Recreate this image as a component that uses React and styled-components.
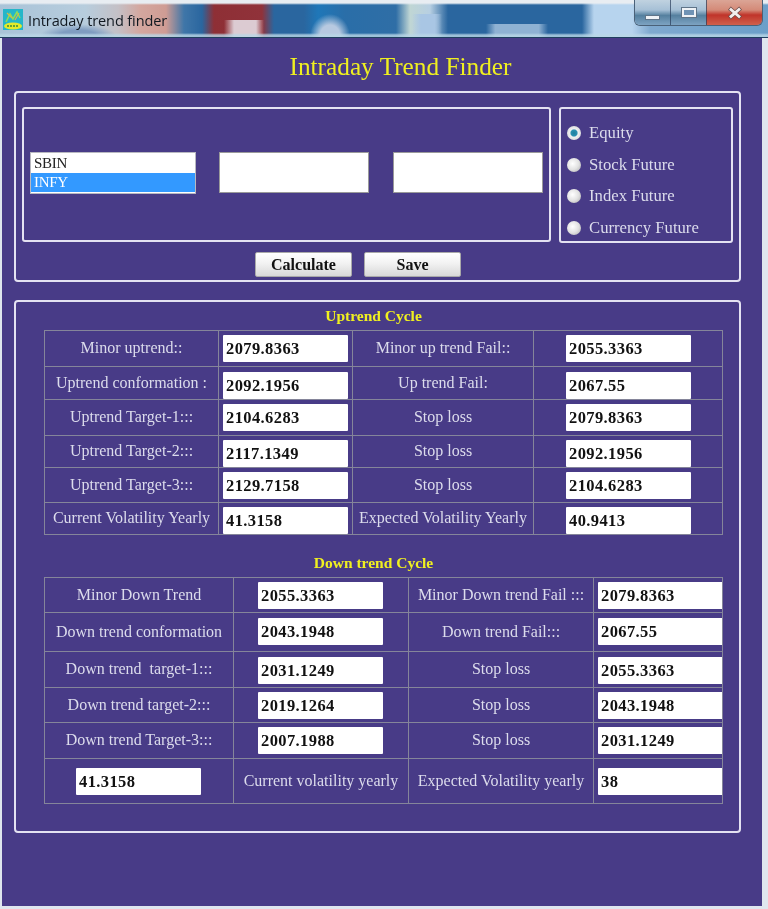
import styled, { createGlobalStyle } from "styled-components"

const GlobalStyle = createGlobalStyle`
	html, body {
		margin: 0;
		background: #dfe6ee;
	}
`

const Window = styled.div`
	width: 760px;
	height: 906px;
	margin-left: 2px;
	background: #483b87;
	font-family: "Liberation Serif", "Times New Roman", serif;
	filter: blur(0.35px);
`

const TitleBar = styled.div`
	height: 37px;
	margin: 0 -6px 0 -2px;
	padding-left: 3px;
	display: flex;
	align-items: flex-start;
	border-bottom: 1px solid #1f3f5f;
	background:
		linear-gradient(180deg, #e8edf2 0, #e8edf2 3px, rgba(255, 255, 255, 0) 5px, rgba(255, 255, 255, 0) 33px, rgba(185, 215, 230, 0.8) 35px, rgba(185, 215, 230, 0.8) 37px),
		linear-gradient(90deg, rgba(220, 203, 210, 0), #dccbd2 25%, #dccbd2 80%, rgba(220, 203, 210, 0)) 224px 20px / 40px 18px no-repeat,
		radial-gradient(farthest-side, #b7c9e0 50%, rgba(183, 201, 224, 0) 100%) 310px 14px / 40px 44px no-repeat,
		linear-gradient(90deg, rgba(169, 198, 228, 0), #a9c6e4 30%, #a9c6e4 75%, rgba(169, 198, 228, 0)) 412px 14px / 30px 24px no-repeat,
		linear-gradient(90deg, rgba(143, 178, 211, 0), #8fb2d3 15%, #8fb2d3 85%, rgba(143, 178, 211, 0)) 486px 24px / 62px 14px no-repeat,
		radial-gradient(farthest-side, #7f9cc0 50%, rgba(127, 156, 192, 0) 100%) 40px 24px / 76px 24px no-repeat,
		linear-gradient(90deg, #a9c3d8 0, #b7cddd 85px, #c4c0c6 118px, #d4a79f 140px, #cf9c94 166px, #3f76a8 184px, #2a669f 202px, #8e2f35 214px, #90323a 262px, #2a669f 274px, #2a669f 304px, #1f77b8 318px, #2a6ea8 345px, #2f6ea6 396px, #c0d6d4 410px, #b7cfe2 430px, #2a669f 448px, #2a669f 582px, #b7d4ee 594px, #b7d4ee 632px, #7fa9cf 650px, #6b9fc9 768px);
`

const AppIcon = styled.svg`
	width: 20px;
	height: 21px;
	margin-top: 9px;
	flex-shrink: 0;
`

const TitleText = styled.span`
	margin: 11px 0 0 5px;
	font: 14.5px "Open Sans", "Liberation Sans", sans-serif;
	letter-spacing: -0.1px;
	color: #101820;
`

const Controls = styled.div`
	display: flex;
	height: 25px;
	margin-left: auto;
	margin-right: 5px;
	border: 1px solid #4a6178;
	border-top: 0;
	border-radius: 0 0 6px 6px;
	overflow: hidden;
`

const ControlButton = styled.div`
	width: ${(p) => p.$width}px;
	display: flex;
	align-items: center;
	justify-content: center;
	border-left: ${(p) => (p.$first ? "0" : "1px solid rgba(40, 60, 90, 0.7)")};
	background: ${(p) =>
		p.$close
			? "linear-gradient(180deg, #dba596 0, #d48a78 40%, #c0342a 60%, #d0604c 100%)"
			: "linear-gradient(180deg, #c0d2e0 0, #a6c0d6 40%, #55809f 62%, #7da3c2 100%)"};
`

const MinGlyph = styled.span`
	width: 13px;
	height: 3px;
	margin-top: 10px;
	background: #eef2f6;
	border: 1px solid #5f7488;
`

const MaxGlyph = styled.span`
	width: 10px;
	height: 5px;
	background: #6f93b5;
	border: 2px solid #eef2f6;
	outline: 1px solid #5f7488;
`

const CloseIcon = styled.svg`
	width: 20px;
	height: 14px;
`

const Content = styled.div`
	padding-left: 12px;
`

const MainHeading = styled.h1`
	margin: 14px 0 11px;
	padding-left: 25px;
	height: 28px;
	text-align: center;
	font-size: 25.3px;
	line-height: 28px;
	font-weight: normal;
	color: #f0f020;
`

const Panel = styled.div`
	width: 727px;
	height: ${(p) => p.$height}px;
	margin-bottom: ${(p) => p.$gap || 0}px;
	padding: ${(p) => p.$padding};
	box-sizing: border-box;
	border: 2px solid #e4e2f2;
	border-radius: 4px;
`

const TopRow = styled.div`
	display: flex;
	gap: 8px;
`

const InputsBox = styled.div`
	width: 529px;
	height: 135px;
	padding: 43px 0 0 6px;
	box-sizing: border-box;
	display: flex;
	align-items: flex-start;
	gap: 23px;
	border: 2px solid #e4e2f2;
	border-radius: 3px;
`

const ListBox = styled.div`
	width: 166px;
	height: 42px;
	box-sizing: border-box;
	border: 1px solid #b8b8c0;
	background: #fff;
	padding-top: 1px;
	font-size: 15px;
	line-height: 19px;
`

const ListItem = styled.div`
	height: 19px;
	padding-left: 3px;
	letter-spacing: -0.3px;
	color: ${(p) => (p.$selected ? "#fff" : "#222")};
	background: ${(p) => (p.$selected ? "#3399ff" : "transparent")};
`

const BlankInput = styled.div`
	width: 150px;
	height: 41px;
	box-sizing: border-box;
	background: #fff;
	border: 1px solid #9a9a9a;

	& + & {
		margin-left: 1px;
	}
`

const RadioBox = styled.div`
	width: 174px;
	height: 136px;
	padding: 8.5px 0 0 6px;
	box-sizing: border-box;
	display: flex;
	flex-direction: column;
	border: 2px solid #e4e2f2;
	border-radius: 3px;
`

const RadioRow = styled.div`
	height: 31.5px;
	flex-shrink: 0;
	display: flex;
	align-items: center;
	gap: 8px;
	font-size: 16.7px;
	color: #dcdcec;
`

const RadioDot = styled.span`
	width: 14px;
	height: 14px;
	border-radius: 50%;
	flex-shrink: 0;
	background: ${(p) =>
		p.$checked
			? "radial-gradient(circle, #1d7f9f 0, #2a8fb0 30%, #f0f0f0 42%, #c9cdd0 100%)"
			: "radial-gradient(circle at 40% 40%, #ffffff 0, #e2e2e2 50%, #a8a8a8 100%)"};
`

const ButtonRow = styled.div`
	display: flex;
	justify-content: center;
	gap: 12px;
	margin-top: 9px;
	padding-right: 45px;
`

const ActionButton = styled.button`
	width: 97px;
	height: 25px;
	padding: 0;
	border: 1px solid #a9a9a9;
	border-radius: 2px;
	background: linear-gradient(180deg, #ffffff 0, #f2f2f2 45%, #d8d8d8 100%);
	font-family: inherit;
	font-size: 16px;
	font-weight: bold;
	color: #111;
`

const CycleHeading = styled.h2`
	margin: 0;
	height: ${(p) => p.$height}px;
	padding: ${(p) => p.$top}px 8px 0 0;
	box-sizing: border-box;
	text-align: center;
	font-size: 15.5px;
	line-height: 16px;
	font-weight: bold;
	color: #f0f020;
`

const Table = styled.table`
	table-layout: fixed;
	width: 678px;
	margin-left: 28px;
	border-collapse: collapse;
	color: #dcdcec;
`

const Row = styled.tr`
	height: ${(p) => p.$height}px;
`

const LabelCell = styled.td`
	padding: 0 0 1px;
	border: 1.5px solid #85859a;
	text-align: center;
	font-size: 16px;
	white-space: pre;
	overflow: hidden;
`

const ValueCell = styled.td`
	padding: ${(p) => p.$top}px 0 0 ${(p) => p.$left}px;
	border: 1.5px solid #85859a;
	vertical-align: top;
	overflow: hidden;
`

/* negative margin: the fields run over the row lines in the reference */
const Value = styled.div`
	width: 125px;
	height: 27px;
	margin-bottom: -8px;
	padding-left: 3px;
	box-sizing: border-box;
	background: #fff;
	border-radius: 1px;
	font-size: 16.5px;
	line-height: 27px;
	font-weight: bold;
	letter-spacing: 0.4px;
	color: #111;
`

const uptrendRows = [
	{ height: 36, top: 4, a: "Minor uptrend::", b: "2079.8363", c: "Minor up trend Fail::", d: "2055.3363" },
	{ height: 33, top: 5, a: "Uptrend conformation :", b: "2092.1956", c: "Up trend Fail:", d: "2067.55" },
	{ height: 36, top: 4, a: "Uptrend Target-1:::", b: "2104.6283", c: "Stop loss", d: "2079.8363" },
	{ height: 32, top: 4, a: "Uptrend Target-2:::", b: "2117.1349", c: "Stop loss", d: "2092.1956" },
	{ height: 35, top: 4, a: "Uptrend Target-3:::", b: "2129.7158", c: "Stop loss", d: "2104.6283" },
	{ height: 32, top: 4, a: "Current Volatility Yearly", b: "41.3158", c: "Expected Volatility Yearly", d: "40.9413" },
]

const downtrendRows = [
	{ height: 35, top: 4, a: "Minor Down Trend", b: "2055.3363", c: "Minor Down trend Fail :::", d: "2079.8363" },
	{ height: 39, top: 5, a: "Down trend conformation", b: "2043.1948", c: "Down trend Fail:::", d: "2067.55" },
	{ height: 36, top: 5, a: "Down trend  target-1:::", b: "2031.1249", c: "Stop loss", d: "2055.3363" },
	{ height: 35, top: 4, a: "Down trend target-2:::", b: "2019.1264", c: "Stop loss", d: "2043.1948" },
	{ height: 36, top: 4, a: "Down trend Target-3:::", b: "2007.1988", c: "Stop loss", d: "2031.1249" },
]

const radios = ["Equity", "Stock Future", "Index Future", "Currency Future"]

const App = () => {
	return (
		<>
			<GlobalStyle />
			<Window>
				<TitleBar>
					<AppIcon viewBox="0 0 20 21">
						<rect width="20" height="21" fill="#25b6c9" />
						<path d="M3 13 L7 5 L10 10 L14 3 L17 9" stroke="#8fdc5a" strokeWidth="1.6" fill="none" />
						<path d="M4 4 L9 9 M12 11 L16 4" stroke="#d8b848" strokeWidth="1.2" fill="none" />
						<ellipse cx="10" cy="17" rx="9" ry="3.6" fill="#e4ea2a" />
						<path d="M4 17h12" stroke="#3a8a3a" strokeWidth="1.4" strokeDasharray="2 1" />
					</AppIcon>
					<TitleText>Intraday trend finder</TitleText>
					<Controls>
						<ControlButton $width={35} $first><MinGlyph /></ControlButton>
						<ControlButton $width={35}><MaxGlyph /></ControlButton>
						<ControlButton $width={55} $close>
							<CloseIcon viewBox="0 0 20 14">
								<path d="M6 3.5 L14 10.5 M14 3.5 L6 10.5" stroke="#6a4a48" strokeWidth="4.2" strokeLinecap="square" />
								<path d="M6 3.5 L14 10.5 M14 3.5 L6 10.5" stroke="#f1eeee" strokeWidth="2.8" strokeLinecap="square" />
							</CloseIcon>
						</ControlButton>
					</Controls>
				</TitleBar>
				<Content>
					<MainHeading>Intraday Trend Finder</MainHeading>
					<Panel $height={191} $gap={18} $padding="14px 0 0 6px">
						<TopRow>
							<InputsBox>
								<ListBox>
									<ListItem>SBIN</ListItem>
									<ListItem $selected>INFY</ListItem>
								</ListBox>
								<BlankInput />
								<BlankInput />
							</InputsBox>
							<RadioBox>
								{radios.map((label, i) => (
									<RadioRow key={label}>
										<RadioDot $checked={i === 0} />
										{label}
									</RadioRow>
								))}
							</RadioBox>
						</TopRow>
						<ButtonRow>
							<ActionButton>Calculate</ActionButton>
							<ActionButton>Save</ActionButton>
						</ButtonRow>
					</Panel>
					<Panel $height={533} $padding="0">
						<CycleHeading $height={28} $top={6}>Uptrend Cycle</CycleHeading>
						<Table>
							<colgroup>
								<col width="174" />
								<col width="134" />
								<col width="181" />
								<col width="189" />
							</colgroup>
							<tbody>
								{uptrendRows.map((r) => (
									<Row key={r.a} $height={r.height}>
										<LabelCell>{r.a}</LabelCell>
										<ValueCell $top={r.top} $left={4}><Value>{r.b}</Value></ValueCell>
										<LabelCell>{r.c}</LabelCell>
										<ValueCell $top={r.top} $left={32}><Value>{r.d}</Value></ValueCell>
									</Row>
								))}
							</tbody>
						</Table>
						<CycleHeading $height={42} $top={20}>Down trend Cycle</CycleHeading>
						<Table>
							<colgroup>
								<col width="189" />
								<col width="175" />
								<col width="185" />
								<col width="129" />
							</colgroup>
							<tbody>
								{downtrendRows.map((r) => (
									<Row key={r.a} $height={r.height}>
										<LabelCell>{r.a}</LabelCell>
										<ValueCell $top={r.top} $left={24}><Value>{r.b}</Value></ValueCell>
										<LabelCell>{r.c}</LabelCell>
										<ValueCell $top={r.top} $left={4}><Value>{r.d}</Value></ValueCell>
									</Row>
								))}
								<Row $height={45}>
									<ValueCell $top={9} $left={31}><Value>41.3158</Value></ValueCell>
									<LabelCell>Current volatility yearly</LabelCell>
									<LabelCell>Expected Volatility yearly</LabelCell>
									<ValueCell $top={9} $left={4}><Value>38</Value></ValueCell>
								</Row>
							</tbody>
						</Table>
					</Panel>
				</Content>
			</Window>
		</>
	)
}

export default App
